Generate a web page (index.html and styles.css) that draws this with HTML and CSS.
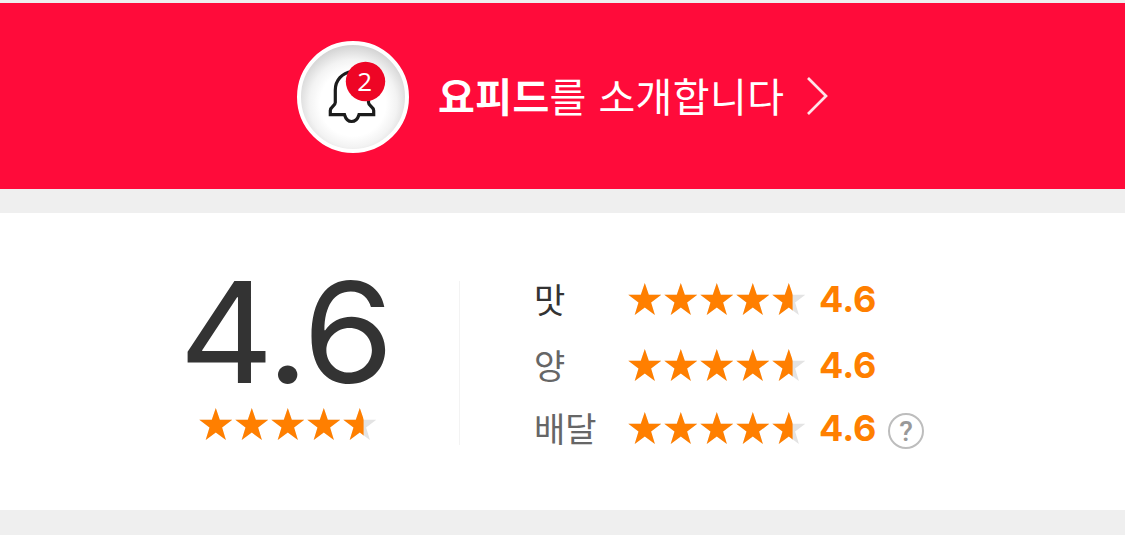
FILE: index.html
```html
<!DOCTYPE html>
<html lang="ko">
<head>
    <meta charset="UTF-8">
    <meta name="viewport" content="width=device-width, initial-scale=1.0">
    <title>리뷰</title>
    <link rel="stylesheet" href="styles.css">
</head>
<body>
    <!-- shared star row, five stars on a 36px step -->
    <svg class="defs" width="0" height="0">
        <defs>
            <path id="star" d="M16.800 0L20.800 11.800H33.300L23.100 19.600L26.900 32L16.800 24.600L6.700 32L10.500 19.600L0.300 11.800H12.800Z"/>
            <g id="stars">
                <use href="#star"/>
                <use href="#star" x="36"/>
                <use href="#star" x="72"/>
                <use href="#star" x="108"/>
                <use href="#star" x="144"/>
            </g>
            <clipPath id="score"><rect width="164.600" height="32"/></clipPath>
        </defs>
    </svg>

    <div class="banner">
        <div class="bell">
            <svg width="112" height="112" viewBox="0 0 112 112">
                <path class="bell-line" d="M55 30.500C45 32 38.300 39 38.300 49V61.500C38.300 65 33.300 65.500 33.300 69.500V73.700H47.500C48.500 77 50.500 80.500 54.500 80.500C58.500 80.500 61 77 62 73.700H76.700V69.500C76.700 65.500 71.500 65 71.500 61.500V50"/>
                <circle class="bell-count" cx="68.500" cy="40.500" r="19.700"/>
                <text class="bell-number" x="67.800" y="49.500">2</text>
            </svg>
        </div>
        <p class="banner-text"><b>요피드</b>를 소개합니다</p>
        <svg class="arrow" width="24" height="40" viewBox="0 0 24 40">
            <path d="M2 2L20 20L2 38"/>
        </svg>
    </div>

    <div class="rating">
        <div class="total">
            <div class="total-score">4.6</div>
            <svg class="stars" width="178" height="32">
                <use class="star-off" href="#stars"/>
                <use class="star-on" href="#stars" clip-path="url(#score)"/>
            </svg>
        </div>
        <div class="details">
            <div class="row">
                <span class="label strong">맛</span>
                <svg class="stars" width="178" height="32">
                    <use class="star-off" href="#stars"/>
                    <use class="star-on" href="#stars" clip-path="url(#score)"/>
                </svg>
                <span class="score">4.6</span>
            </div>
            <div class="row">
                <span class="label">양</span>
                <svg class="stars" width="178" height="32">
                    <use class="star-off" href="#stars"/>
                    <use class="star-on" href="#stars" clip-path="url(#score)"/>
                </svg>
                <span class="score">4.6</span>
            </div>
            <div class="row">
                <span class="label">배달</span>
                <svg class="stars" width="178" height="32">
                    <use class="star-off" href="#stars"/>
                    <use class="star-on" href="#stars" clip-path="url(#score)"/>
                </svg>
                <span class="score">4.6</span>
                <span class="help">?</span>
            </div>
        </div>
    </div>
</body>
</html>
```
FILE: styles.css
```css
* {
    box-sizing: border-box;
}
body {
    margin: 0;
    height: 542px;
    overflow: hidden;
    background-color: #fff;
    border-top: 3px solid #efefef;
    font-family: Inter, "Noto Sans CJK KR", sans-serif;
    color: #333;
}
.defs {
    display: block;
}
.banner {
    height: 186px;
    padding-left: 297px;
    display: flex;
    align-items: center;
    background-color: #ff0b3a;
}
.bell {
    width: 112px;
    height: 112px;
    margin-top: 2px;
    border-radius: 50%;
    border: 4px solid #fff;
    background: radial-gradient(circle at 50% 56%, #fff 42%, #f3f3f3 56%, #d0d0d0 76%);
}
.bell svg {
    display: block;
    margin: -4px;
}
.bell-line {
    fill: #fff;
    stroke: #1c1c1c;
    stroke-width: 3.2;
}
.bell-count {
    fill: #ee0525;
}
.bell-number {
    fill: #fff;
    font-family: "Open Sans", sans-serif;
    font-size: 26px;
    text-anchor: middle;
}
.banner-text {
    margin: 0 0 2px 29px;
    width: 346px;
    font-family: "Noto Sans CJK KR", sans-serif;
    font-size: 40px;
    letter-spacing: 0.4px;
    line-height: 60px;
    white-space: nowrap;
    color: #fff;
}
.arrow {
    margin-left: 22px;
}
.arrow path {
    fill: none;
    stroke: #ffe3e8;
    stroke-width: 2.7;
}
.rating {
    height: 346px;
    display: flex;
    border-top: 24px solid #efefef;
    border-bottom: 25px solid #efefef;
    padding: 68px 0 65px 179px;
}
.total {
    width: 281px;
    border-right: 1px solid #f3f3f3;
}
.total-score {
    height: 127px;
    font-size: 140px;
    letter-spacing: -2.3px;
    line-height: 102px;
    transform: scaleX(1.05);
    transform-origin: left;
}
.total .stars {
    margin-left: 20px;
}
.stars {
    display: block;
    flex: none;
}
.star-off {
    fill: #e3e3e3;
}
.star-on {
    fill: #ff7f00;
}
.details {
    padding-left: 74px;
}
.row {
    height: 36px;
    margin-bottom: 30px;
    display: flex;
    align-items: center;
}
.row:nth-child(2) {
    margin-bottom: 27px;
}
.label {
    width: 94px;
    font-family: "Noto Sans CJK KR", sans-serif;
    font-size: 34px;
    line-height: 36px;
    color: #666;
}
.label.strong {
    color: #333;
}
.score {
    width: 57px;
    margin-left: 13px;
    font-size: 36px;
    font-weight: 700;
    line-height: 36px;
    color: #ff7f00;
}
.help {
    width: 36px;
    height: 36px;
    margin: 6px 0 0 12px;
    border: 2px solid #bdbdbd;
    border-radius: 50%;
    font-family: Roboto, sans-serif;
    font-size: 28px;
    font-weight: 500;
    line-height: 33px;
    text-align: center;
    color: #999;
}
```
